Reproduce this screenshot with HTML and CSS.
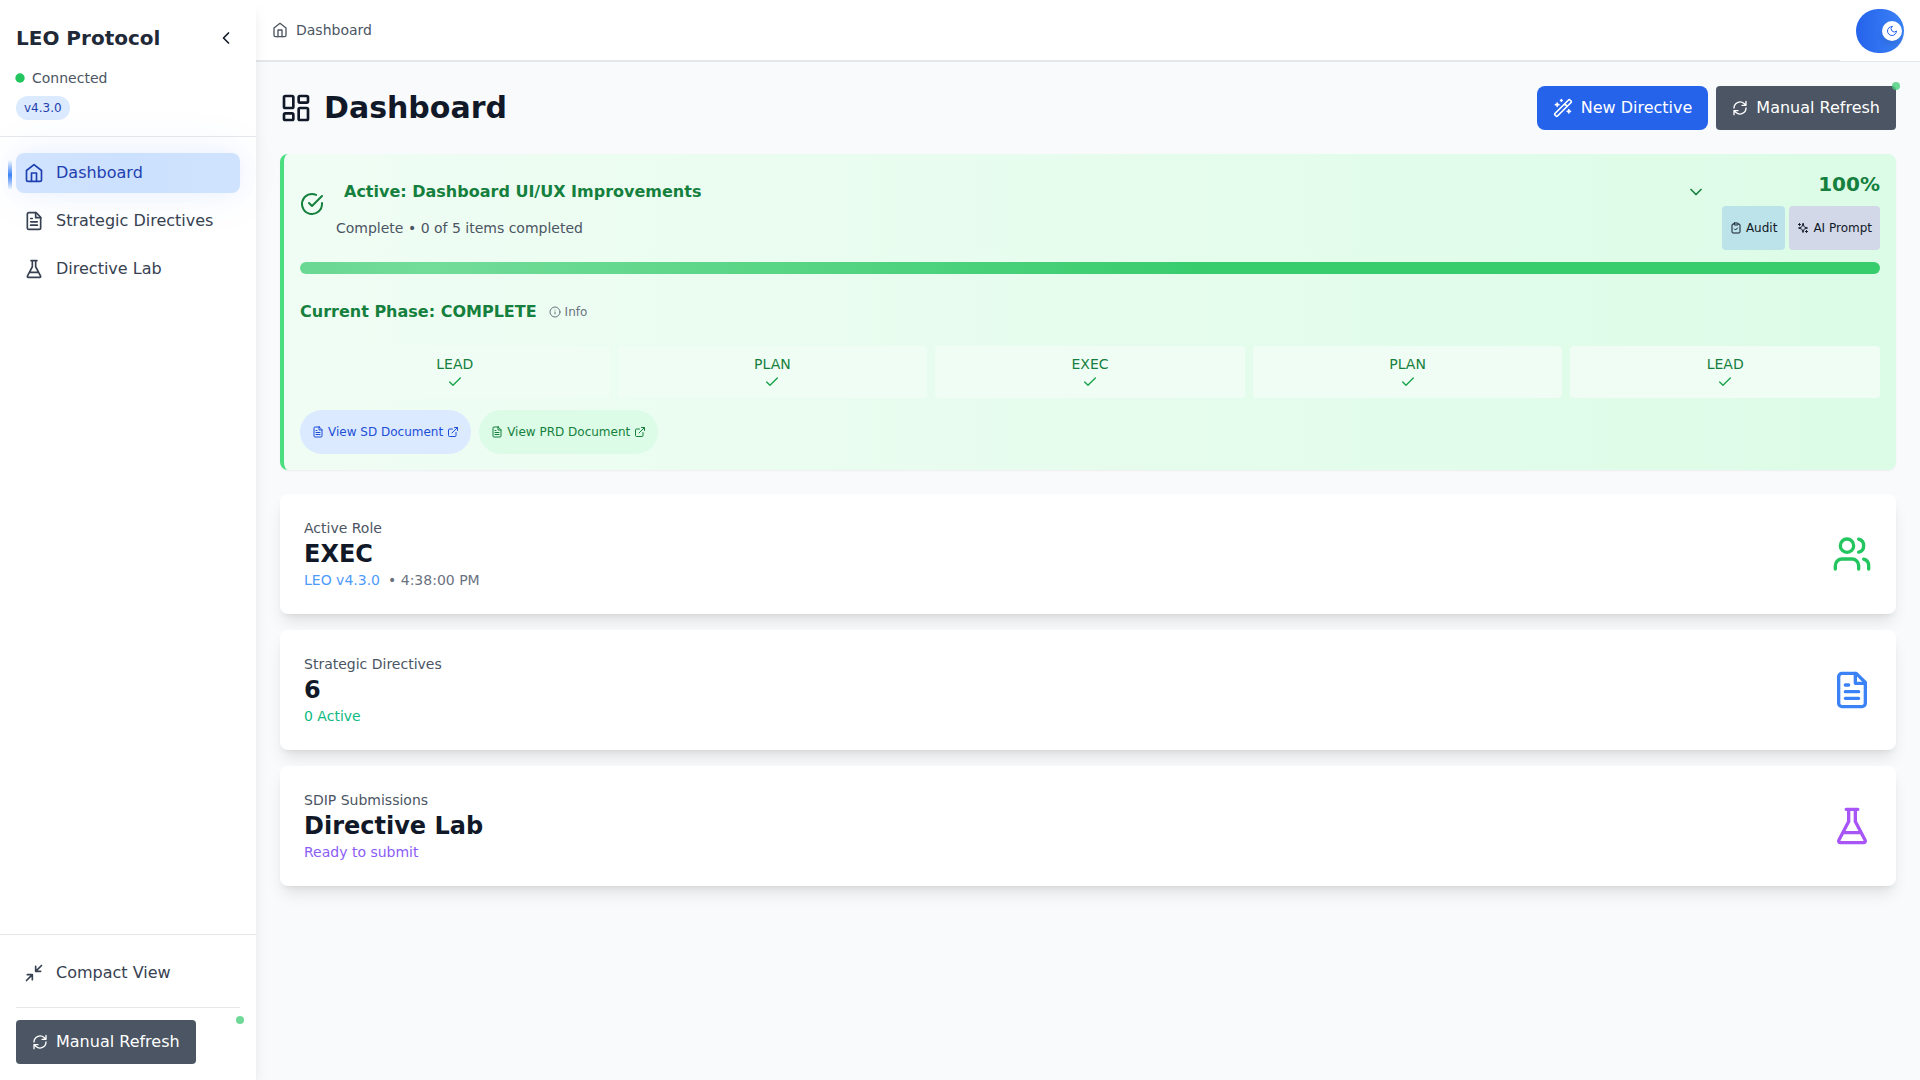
FILE: index.html
```html
<!DOCTYPE html>
<html lang="en">
<head>
<meta charset="utf-8">
<title>LEO Protocol Dashboard</title>
<link rel="stylesheet" href="styles.css">
</head>
<body>
<svg class="sprite" aria-hidden="true">
  <symbol id="chevron-left" viewBox="0 0 24 24"><path d="m15 18-6-6 6-6"/></symbol>
  <symbol id="chevron-down" viewBox="0 0 24 24"><path d="m6 9 6 6 6-6"/></symbol>
  <symbol id="home" viewBox="0 0 24 24"><path d="m3 9 9-7 9 7v11a2 2 0 0 1-2 2H5a2 2 0 0 1-2-2z"/><path d="M9 22V12h6v10"/></symbol>
  <symbol id="file" viewBox="0 0 24 24"><path d="M14.5 2H6a2 2 0 0 0-2 2v16a2 2 0 0 0 2 2h12a2 2 0 0 0 2-2V7.5L14.5 2z"/><path d="M14 2v6h6M16 13H8M16 17H8M10 9H8"/></symbol>
  <symbol id="flask" viewBox="0 0 24 24"><path d="M10 2v7.31L4.1 20.55A1 1 0 0 0 5 22h14a1 1 0 0 0 .9-1.45L14 9.3V2M8.5 2h7M7 16h10"/></symbol>
  <symbol id="minimize" viewBox="0 0 24 24"><path d="M4 14h6v6M20 10h-6V4M14 10l7-7M3 21l7-7"/></symbol>
  <symbol id="refresh" viewBox="0 0 24 24"><path d="M21 2v6h-6M3 12a9 9 0 0 1 15-6.7L21 8M3 22v-6h6M21 12a9 9 0 0 1-15 6.7L3 16"/></symbol>
  <symbol id="moon" viewBox="0 0 24 24"><path d="M12 3a6 6 0 0 0 9 9 9 9 0 1 1-9-9Z"/></symbol>
  <symbol id="layout" viewBox="0 0 24 24"><rect x="3" y="3" width="7" height="9" rx="1"/><rect x="14" y="3" width="7" height="5" rx="1"/><rect x="14" y="12" width="7" height="9" rx="1"/><rect x="3" y="16" width="7" height="5" rx="1"/></symbol>
  <symbol id="wand" viewBox="0 0 24 24"><path d="m21.64 3.64-1.28-1.28a1.08 1.08 0 0 0-1.72 0L2.36 18.64a1.21 1.21 0 0 0 0 1.72l1.28 1.28a1.2 1.2 0 0 0 1.72 0L21.64 5.36a1.2 1.2 0 0 0 0-1.72ZM14 7l3 3M5 6v4M19 14v4M10 2v2M7 8H3M21 16h-4M11 3H9"/></symbol>
  <symbol id="check-circle" viewBox="0 0 24 24"><path d="M22 11.08V12a10 10 0 1 1-5.93-9.14"/><path d="m9 11 3 3L22 4"/></symbol>
  <symbol id="clipboard" viewBox="0 0 24 24"><rect x="8" y="2" width="8" height="4" rx="1"/><path d="M16 4h2a2 2 0 0 1 2 2v14a2 2 0 0 1-2 2H6a2 2 0 0 1-2-2V6a2 2 0 0 1 2-2h2M9 14l2 2 4-4"/></symbol>
  <symbol id="sparkles" viewBox="0 0 24 24"><path d="m12 3-1.9 5.8a2 2 0 0 1-1.287 1.288L3 12l5.8 1.9a2 2 0 0 1 1.288 1.287L12 21l1.9-5.8a2 2 0 0 1 1.287-1.288L21 12l-5.8-1.9a2 2 0 0 1-1.288-1.287ZM5 3v4M19 17v4M3 5h4M17 19h4"/></symbol>
  <symbol id="info" viewBox="0 0 24 24"><circle cx="12" cy="12" r="10"/><path d="M12 16v-4M12 8h.01"/></symbol>
  <symbol id="check" viewBox="0 0 24 24"><path d="M20 6 9 17l-5-5"/></symbol>
  <symbol id="external" viewBox="0 0 24 24"><path d="M15 3h6v6M10 14 21 3M18 13v6a2 2 0 0 1-2 2H5a2 2 0 0 1-2-2V8a2 2 0 0 1 2-2h6"/></symbol>
  <symbol id="users" viewBox="0 0 24 24"><path d="M16 21v-2a4 4 0 0 0-4-4H6a4 4 0 0 0-4 4v2"/><circle cx="9" cy="7" r="4"/><path d="M22 21v-2a4 4 0 0 0-3-3.87M16 3.13a4 4 0 0 1 0 7.75"/></symbol>
</svg>
<div class="app">
  <aside class="sidebar">
    <div class="brand">
      <div class="brand-row"><h2>LEO Protocol</h2><svg class="icon i20 collapse"><use href="#chevron-left"/></svg></div>
      <div class="status"><span class="status-dot"></span>Connected</div>
      <span class="version">v4.3.0</span>
    </div>
    <nav class="nav">
      <a class="nav-item active"><svg class="icon i20"><use href="#home"/></svg>Dashboard</a>
      <a class="nav-item"><svg class="icon i20"><use href="#file"/></svg>Strategic Directives</a>
      <a class="nav-item"><svg class="icon i20"><use href="#flask"/></svg>Directive Lab</a>
    </nav>
    <div class="side-foot">
      <a class="nav-item"><svg class="icon i20"><use href="#minimize"/></svg>Compact View</a>
      <div class="side-refresh"><div class="refresh-wrap"><button class="btn refresh"><svg class="icon i16"><use href="#refresh"/></svg>Manual Refresh</button><span class="live-dot"></span></div></div>
    </div>
  </aside>
  <div class="content">
    <header class="topbar">
      <div class="crumbs"><svg class="icon i16"><use href="#home"/></svg>Dashboard</div>
      <div class="theme"><button class="toggle"><span class="knob"><svg class="icon i12"><use href="#moon"/></svg></span></button></div>
    </header>
    <main class="page">
      <div class="page-head">
        <h1><svg class="icon i32"><use href="#layout"/></svg>Dashboard</h1>
        <div class="actions">
          <button class="btn primary"><svg class="icon i20"><use href="#wand"/></svg>New Directive</button>
          <div class="refresh-wrap"><button class="btn refresh"><svg class="icon i16"><use href="#refresh"/></svg>Manual Refresh</button><span class="live-dot"></span></div>
        </div>
      </div>
      <section class="active-card">
        <div class="active-head">
          <svg class="icon i24 done"><use href="#check-circle"/></svg>
          <div class="active-info">
            <div class="active-title"><h3>Active: Dashboard UI/UX Improvements</h3><svg class="icon i20"><use href="#chevron-down"/></svg></div>
            <p>Complete • 0 of 5 items completed</p>
          </div>
          <div class="active-side">
            <div class="percent">100%</div>
            <div class="tools">
              <button class="tool audit"><svg class="icon i12"><use href="#clipboard"/></svg>Audit</button>
              <button class="tool prompt"><svg class="icon i12"><use href="#sparkles"/></svg>AI Prompt</button>
            </div>
          </div>
        </div>
        <div class="progress"></div>
        <div class="phase-head"><h3>Current Phase: COMPLETE</h3><span class="info"><svg class="icon i12"><use href="#info"/></svg>Info</span></div>
        <div class="phases">
          <div class="phase">LEAD<svg class="icon i16"><use href="#check"/></svg></div>
          <div class="phase">PLAN<svg class="icon i16"><use href="#check"/></svg></div>
          <div class="phase">EXEC<svg class="icon i16"><use href="#check"/></svg></div>
          <div class="phase">PLAN<svg class="icon i16"><use href="#check"/></svg></div>
          <div class="phase">LEAD<svg class="icon i16"><use href="#check"/></svg></div>
        </div>
        <div class="docs">
          <a class="doc sd"><svg class="icon i12"><use href="#file"/></svg>View SD Document<svg class="icon i12"><use href="#external"/></svg></a>
          <a class="doc prd"><svg class="icon i12"><use href="#file"/></svg>View PRD Document<svg class="icon i12"><use href="#external"/></svg></a>
        </div>
      </section>
      <div class="stats">
        <section class="stat"><div><p class="label">Active Role</p><p class="value">EXEC</p><p class="sub"><span class="leo">LEO v4.3.0</span><span class="time">• 4:38:00 PM</span></p></div><svg class="icon i40 green"><use href="#users"/></svg></section>
        <section class="stat"><div><p class="label">Strategic Directives</p><p class="value">6</p><p class="sub count">0 Active</p></div><svg class="icon i40 blue"><use href="#file"/></svg></section>
        <section class="stat"><div><p class="label">SDIP Submissions</p><p class="value">Directive Lab</p><p class="sub ready">Ready to submit</p></div><svg class="icon i40 purple"><use href="#flask"/></svg></section>
      </div>
    </main>
  </div>
</div>
</body>
</html>
```
FILE: styles.css
```css
* { box-sizing: border-box; }
body { margin: 0; font: 16px/24px "DejaVu Sans", sans-serif; color: #111827; background: #f9fafb; }
h1, h2, h3, p { margin: 0; }
button { border: 0; font: inherit; color: inherit; }
.sprite { position: absolute; width: 0; height: 0; }
.icon { display: block; flex: none; fill: none; stroke: currentColor; stroke-width: 2; stroke-linecap: round; stroke-linejoin: round; }
.i12 { width: 12px; height: 12px; }
.i16 { width: 16px; height: 16px; }
.i20 { width: 20px; height: 20px; }
.i24 { width: 24px; height: 24px; }
.i32 { width: 32px; height: 32px; }
.i40 { width: 40px; height: 40px; }

.app { display: flex; height: 1080px; overflow: hidden; }
.sidebar { position: relative; z-index: 1; flex: none; width: 256px; display: flex; flex-direction: column; background: #fff; box-shadow: 0 10px 15px -3px rgba(0,0,0,.1), 0 4px 6px -4px rgba(0,0,0,.1); }
.brand { height: 137px; padding: 16px; border-bottom: 1px solid #e5e7eb; }
.brand-row { display: flex; align-items: center; justify-content: space-between; height: 44px; }
.brand h2 { font-size: 20px; line-height: 28px; color: #1f2937; }
.collapse { margin-right: 4px; }
.status { display: flex; align-items: center; gap: 8px; margin-top: 8px; font-size: 14px; line-height: 20px; color: #4b5563; }
.status-dot { width: 8px; height: 8px; border-radius: 50%; background: #22c55e; transform: scale(1.17); }
.version { display: block; width: fit-content; margin-top: 8px; padding: 4px 8px; border-radius: 12px; background: #dbeafe; color: #1e40af; font-size: 12px; line-height: 16px; }
.nav { flex: 1; display: flex; flex-direction: column; gap: 8px; padding: 16px; }
.nav-item { position: relative; display: flex; align-items: center; gap: 12px; height: 40px; padding: 0 8px; border-radius: 8px; color: #374151; }
.nav-item.active { background: linear-gradient(90deg, #d1e3ff, #cce1fe 50%, #d0e3fe); color: #1e40af; box-shadow: 0 0 20px rgba(59,130,246,.07), 0 0 50px rgba(59,130,246,.08); }
.nav-item.active::before { content: ""; position: absolute; left: -8px; top: 7px; width: 4px; height: 30px; background: linear-gradient(transparent, #3b82f6, transparent); }
.side-foot { padding: 18px 16px 16px; border-top: 1px solid #e5e7eb; }
.side-refresh { margin-top: 14px; padding-top: 12px; border-top: 1px solid #e5e7eb; }

.btn { display: flex; align-items: center; gap: 8px; height: 44px; padding: 0 16px; color: #fff; }
.refresh { background: #4b5563; border-radius: 4px; }
.primary { background: #2563eb; border-radius: 8px; }
.refresh-wrap { position: relative; }
.live-dot { position: absolute; top: -4px; right: -4px; width: 8px; height: 8px; border-radius: 50%; background: rgba(72,208,124,.8); }

.content { flex: 1; min-width: 0; }
.topbar { display: flex; height: 62px; background: #fff; border-bottom: 1px solid #e5e7eb; }
.crumbs { flex: 1; display: flex; align-items: center; gap: 8px; padding: 0 16px; border-bottom: 1px solid #e5e7eb; font-size: 14px; line-height: 20px; color: #4b5563; }
.theme { display: flex; align-items: center; padding: 1px 16px 0; }
.toggle { width: 48px; height: 44px; padding: 0 2px; display: flex; align-items: center; justify-content: flex-end; border-radius: 22px; background: linear-gradient(90deg, #2563eb, #3b82f6); }
.knob { display: grid; place-items: center; width: 20px; height: 20px; border-radius: 50%; background: #fff; color: #2563eb; box-shadow: 0 4px 6px rgba(0,0,0,.1); }

.page { padding: 24px; }
.page-head { display: flex; align-items: center; justify-content: space-between; height: 44px; margin-bottom: 24px; }
h1 { display: flex; align-items: center; gap: 12px; font-size: 30px; line-height: 36px; }
.actions { display: flex; gap: 8px; }

.active-card { height: 316px; padding: 16px; border-left: 4px solid #4ade80; border-radius: 8px; background: linear-gradient(90deg, #f0fdf4, #dcfce7); box-shadow: 0 1px 2px rgba(0,0,0,.05); }
.active-head { display: flex; gap: 12px; height: 80px; }
.done { margin-top: 22px; }
.active-head, .phase-head, .phase { color: #15803d; }
.active-info { flex: 1; }
.active-title { display: flex; align-items: center; justify-content: space-between; height: 44px; padding: 0 8px; }
.active-info, .active-title { min-width: 0; }
.active-info p { margin-top: 4px; font-size: 14px; line-height: 20px; color: #4b5563; }
.active-side { margin-left: -4px; }
h3 { font-size: 16px; line-height: 24px; font-weight: 600; }
.percent { font-size: 20px; line-height: 28px; font-weight: 700; text-align: right; }
.tools { display: flex; gap: 4px; margin-top: 8px; }
.tool { display: flex; align-items: center; gap: 4px; height: 44px; padding: 0 8px; border-radius: 4px; font-size: 12px; color: #111827; }
.audit { background: #bce3e9; }
.prompt { background: #d2d8e8; }
.progress { height: 12px; margin-top: 12px; border-radius: 6px; background: linear-gradient(90deg, #69d892, #72dc99 8%, #37cc6c 58%, #37cc6c); }
.phase-head { display: flex; align-items: center; gap: 12px; height: 44px; margin-top: 16px; }
.info { display: flex; align-items: center; gap: 4px; font-size: 12px; color: #6b7280; }
.phases { display: grid; grid-template-columns: repeat(5, 1fr); gap: 8px; margin-top: 12px; }
.phase { display: flex; flex-direction: column; align-items: center; height: 52px; padding-top: 8px; border-radius: 4px; background: #f0fdf4; font-size: 14px; line-height: 20px; }
.phase .icon { color: #16a34a; }
.docs { display: flex; gap: 8px; margin-top: 12px; }
.doc { display: flex; align-items: center; gap: 4px; height: 44px; padding: 0 12px; border-radius: 22px; font-size: 12px; }
.sd { background: #dbeafe; color: #1d4ed8; }
.prd { background: #dcfce7; color: #15803d; }

.stats { display: grid; gap: 16px; margin-top: 24px; }
.stat { display: flex; align-items: center; justify-content: space-between; height: 120px; padding: 24px; border-radius: 8px; background: #fff; box-shadow: 0 10px 15px -3px rgba(0,0,0,.1), 0 4px 6px -4px rgba(0,0,0,.1); }
.label, .sub { font-size: 14px; line-height: 20px; }
.label { color: #4b5563; }
.value { font-size: 24px; line-height: 32px; font-weight: 700; }
.leo { color: #4d9bfa; }
.time { margin-left: 8px; color: #6b7280; }
.count { color: #10b981; }
.ready { color: #8b5cf6; }
.green { color: #22c55e; }
.blue { color: #3b82f6; }
.purple { color: #a855f7; }
```
